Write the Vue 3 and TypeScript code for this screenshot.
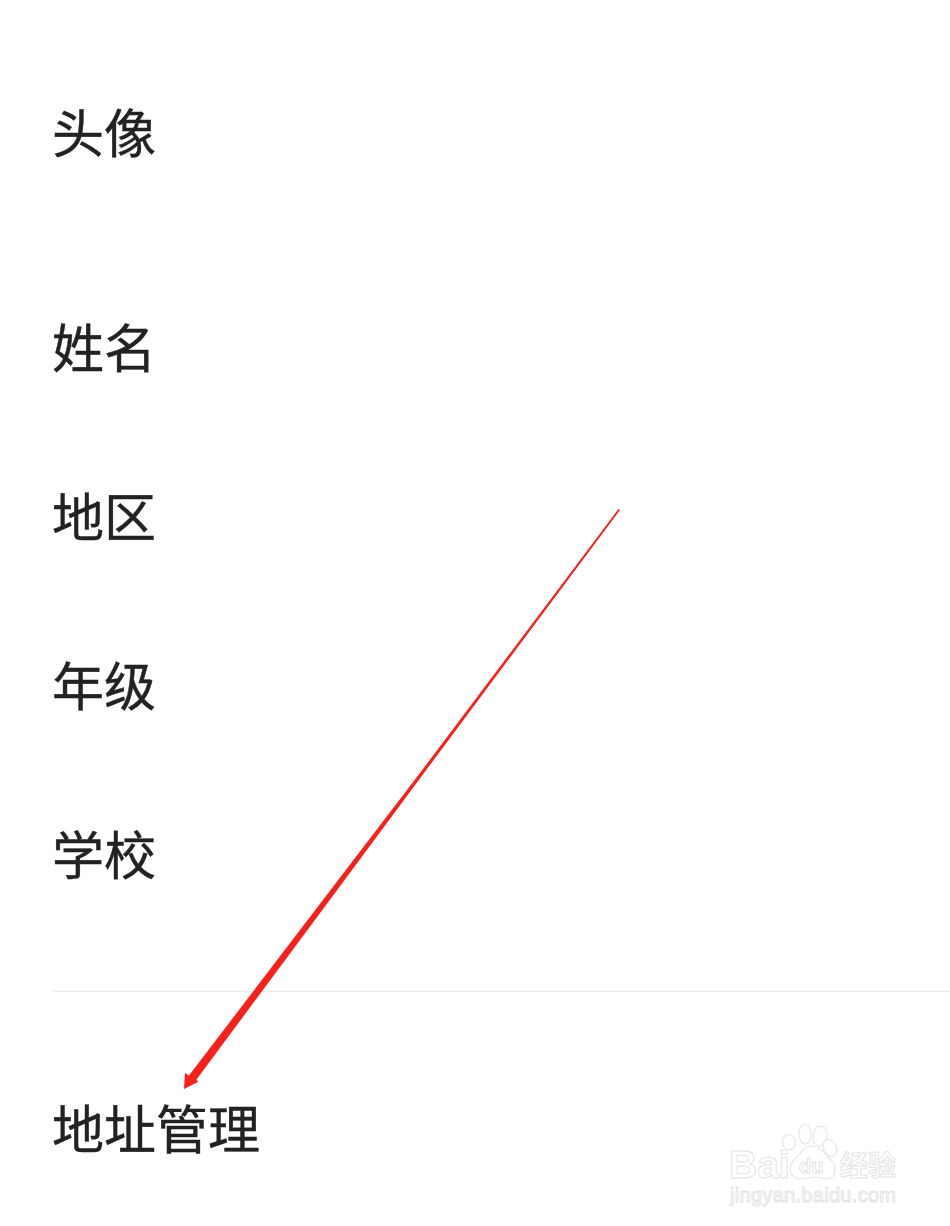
<script setup lang="ts">
const topRows: string[] = ['姓名', '地区', '年级', '学校']
</script>

<template>
  <main class="page">
    <div class="row">头像</div>
    <section class="group">
      <div v-for="label in topRows" :key="label" class="row">{{ label }}</div>
    </section>
    <div class="divider"></div>
    <div class="row address-row">地址管理</div>

    <svg class="arrow" viewBox="0 0 950 1226" width="950" height="1226" aria-hidden="true">
      <path d="M618.500 509 L620 510 L425.500 771 L196.500 1079.500 L198 1082 L184 1089 L185 1073 L189 1075.500 L423 769 Z" fill="#f7211b" />
    </svg>

    <div class="watermark">
      <svg class="paw" viewBox="0 0 120 90" width="120" height="90" aria-hidden="true">
        <g fill="#fff" stroke="#e6e6e6" stroke-width="1.200">
          <ellipse cx="12" cy="20" rx="6.500" ry="7.500" transform="rotate(-12 12 20)" />
          <ellipse cx="28" cy="12" rx="6" ry="10" />
          <ellipse cx="43" cy="14" rx="7" ry="10" transform="rotate(10 43 14)" />
          <ellipse cx="53" cy="26" rx="6.500" ry="9" transform="rotate(-25 53 26)" />
          <path d="M35 24 C26 24 24 32 18 37 C11 43 11 57 25 57 C30 57 33 55 37 55 C42 55 46 57 50 57 C60 56 60 42 53 37 C47 32 44 24 35 24 Z" />
        </g>
      </svg>
      <span class="mark bai">Bai</span>
      <span class="mark du">du</span>
      <span class="mark jingyan">经验</span>
      <span class="mark url">jingyan.baidu.com</span>
    </div>
  </main>
</template>

<style scoped>
.page {
  position: relative;
  box-sizing: border-box;
  width: 950px;
  height: 1226px;
  padding-top: 46px;
  overflow: hidden;
  background: #fff;
  color: #222;
  font-family: "Noto Sans CJK SC", "Liberation Sans", sans-serif;
}

.row {
  display: flex;
  align-items: center;
  height: 169px;
  padding-left: 52px;
  font-size: 52px;
  font-weight: 400;
  -webkit-text-stroke: 0.4px #222;
  line-height: 1;
}

.group {
  margin-top: 46px;
}

.divider {
  height: 1px;
  margin: 54px 0 0 53px;
  background: #ececec;
}

.address-row {
  margin-top: 50px;
}

.arrow {
  position: absolute;
  left: 0;
  top: 0;
}

.watermark {
  position: absolute;
  left: 725px;
  top: 1120px;
  width: 180px;
  height: 90px;
}

.paw {
  position: absolute;
  left: 52px;
  top: 2px;
}

.mark {
  position: absolute;
  color: #fff;
  -webkit-text-stroke: 1px #e4e4e4;
  line-height: 1;
  white-space: nowrap;
}

.bai {
  left: 4px;
  top: 25px;
  font-family: "Liberation Sans", sans-serif;
  font-size: 39px;
  font-weight: 700;
}

.du {
  left: 74px;
  top: 36px;
  font-family: "Liberation Sans", sans-serif;
  font-size: 20px;
  font-weight: 700;
}

.jingyan {
  left: 115px;
  top: 30px;
  font-size: 28px;
  font-weight: 700;
}

.url {
  left: 5px;
  top: 65px;
  font-family: "Liberation Sans", sans-serif;
  font-size: 20px;
  letter-spacing: 0.300px;
}
</style>
